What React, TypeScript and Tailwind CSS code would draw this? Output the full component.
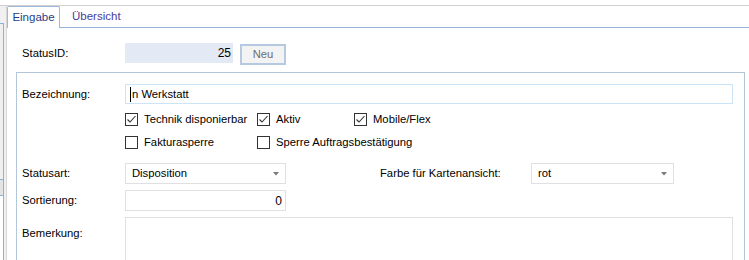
import React from 'react';

function CheckBox({ label, checked, width }: { label: string; checked?: boolean; width?: string }) {
  return (
    <div className={`flex items-center gap-[6px] h-[13px] ${width ?? ''}`}>
      <div className="w-[13px] h-[13px] border border-[#333333] bg-white shrink-0">
        {checked && (
          <svg width="11" height="11" viewBox="0 0 11 11" className="block">
            <polyline points="1.5,5.5 4,8 9.5,2" fill="none" stroke="#333333" strokeWidth="1.1" />
          </svg>
        )}
      </div>
      <span className="whitespace-nowrap leading-none">{label}</span>
    </div>
  );
}

function SelectBox({ value, width }: { value: string; width: string }) {
  return (
    <div className={`${width} h-[21px] border border-[#e0e0e0] bg-white flex items-center pl-[6px] pr-[6px] justify-between`}>
      <span>{value}</span>
      <svg width="6" height="4" viewBox="0 0 6 4" className="block">
        <polygon points="0,0 6,0 3,3.5" fill="#7a7a7a" />
      </svg>
    </div>
  );
}

export default function App() {
  return (
    <div className="w-[749px] h-[260px] overflow-hidden bg-white text-[11.25px] text-black font-['Liberation_Sans',Arial,sans-serif]">
      {/* top edge */}
      <div className="h-[6px] border-b border-[#d0d0d0]" />

      <div className="flex h-[254px]">
        {/* left side panel edge */}
        <div className="w-[7px] shrink-0 bg-[#f0f0f0] border-r border-[#d8d8d8] flex flex-col">
          <div className="h-[17px]" />
          <div className="w-[4px] h-[156px] border-r border-t border-[#8fb0d8] bg-[#f0f0f0]" />
          <div className="w-[4px] h-[17px] border-r border-y border-[#8fb0d8] bg-[#e4e4e4]" />
          <div className="w-[4px] flex-1 border-r border-[#8fb0d8] bg-white" />
        </div>

        <div className="flex-1 flex flex-col">
          {/* tab strip */}
          <div className="h-[22px] shrink-0 border-b border-[#98b2d4] flex items-end">
            <div className="w-[53px] h-[22px] -mb-px bg-white border border-b-0 border-[#9db9dc] rounded-t-[2px] flex items-center justify-center text-[#1f3f86] text-[11.5px]">
              Eingabe
            </div>
            <div className="ml-[12px] h-[21px] flex items-center text-[#4a3c9c] text-[11.5px]">Übersicht</div>
          </div>

          {/* StatusID */}
          <div className="mt-[15px] ml-[15px] h-[20px] shrink-0 flex items-start">
            <div className="w-[103px] h-[20px] flex items-center">StatusID:</div>
            <div className="w-[108px] h-[20px] bg-[#e3e9f5] flex items-center justify-end pr-[2px] text-[12px]">25</div>
            <div className="ml-[7px] mt-[1px] w-[46px] h-[21px] border-2 border-[#b5c9e0] bg-[#f3f3f3] flex items-center justify-center text-[#6d6d6d]">
              Neu
            </div>
          </div>

          {/* group box */}
          <div className="mt-[9px] ml-[9px] w-[729px] flex-1 border border-b-0 border-[#b4c6da] pl-[5px] pt-[11px] flex flex-col">
            <div className="flex items-center">
              <div className="w-[103px]">Bezeichnung:</div>
              <div className="w-[608px] h-[20px] border border-[#cce4f7] flex items-center pl-[4px]">
                <span className="w-px h-[15px] bg-black mr-[1px]" />
                <span>n Werkstatt</span>
              </div>
            </div>

            <div className="mt-[9px] ml-[103px] flex flex-col gap-[10px]">
              <div className="flex">
                <CheckBox label="Technik disponierbar" checked width="w-[132px]" />
                <CheckBox label="Aktiv" checked width="w-[97px]" />
                <CheckBox label="Mobile/Flex" checked />
              </div>
              <div className="flex">
                <CheckBox label="Fakturasperre" width="w-[132px]" />
                <CheckBox label="Sperre Auftragsbestätigung" />
              </div>
            </div>

            <div className="mt-[14px] flex items-center">
              <div className="w-[103px]">Statusart:</div>
              <SelectBox value="Disposition" width="w-[161px]" />
              <div className="ml-[94px] w-[151px]">Farbe für Kartenansicht:</div>
              <SelectBox value="rot" width="w-[143px]" />
            </div>

            <div className="mt-[6px] flex items-center">
              <div className="w-[103px]">Sortierung:</div>
              <div className="w-[161px] h-[21px] border border-[#e0e0e0] flex items-center justify-end pr-[3px] text-[12px]">0</div>
            </div>

            <div className="mt-[6px] flex items-start">
              <div className="w-[103px] mt-[8px]">Bemerkung:</div>
              <div className="w-[608px] h-[60px] border border-[#e0e0e0]" />
            </div>
          </div>
        </div>
      </div>
    </div>
  );
}
